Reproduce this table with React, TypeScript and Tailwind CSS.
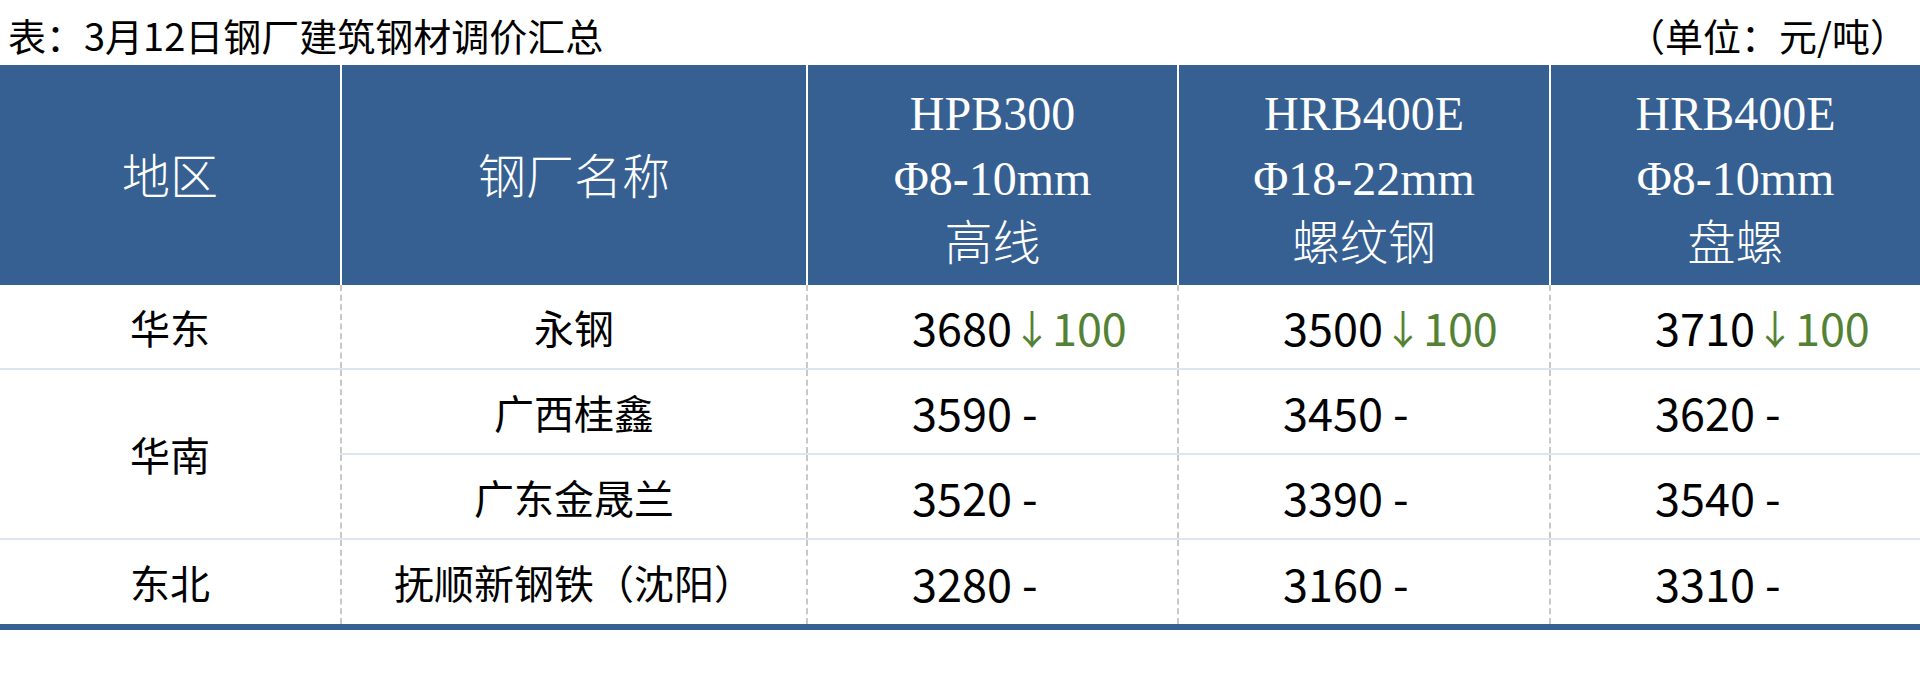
import React from "react";

type Row = { mill: string; prices: string[]; change?: string };

const specs = [
  { grade: "HPB300", size: "8-10mm", kind: "高线" },
  { grade: "HRB400E", size: "18-22mm", kind: "螺纹钢" },
  { grade: "HRB400E", size: "8-10mm", kind: "盘螺" },
];

const rows: Row[] = [
  { mill: "永钢", prices: ["3680", "3500", "3710"], change: "100" },
  { mill: "广西桂鑫", prices: ["3590", "3450", "3620"] },
  { mill: "广东金晟兰", prices: ["3520", "3390", "3540"] },
  { mill: "抚顺新钢铁（沈阳）", prices: ["3280", "3160", "3310"] },
];

function PriceCell({ price, change }: { price: string; change?: string }) {
  return (
    <div className="flex items-center border-l-2 border-dashed border-[#c8c8c8] pl-[104px] text-[45px] leading-none">
      <span>{price}</span>
      {change ? (
        <span className="flex items-center text-[#548235]">
          <span className="text-[40px]">↓</span>
          <span>{change}</span>
        </span>
      ) : (
        <span>&nbsp;-</span>
      )}
    </div>
  );
}

export default function App() {
  return (
    <div className="h-[676px] w-[1920px] bg-white font-['Noto_Sans_CJK_SC',sans-serif] text-black">
      {/* title */}
      <div className="flex h-[65px] items-center justify-between pl-[8px] pr-[12px] pt-[4px] text-[38px] leading-none">
        <span>表：3月12日钢厂建筑钢材调价汇总</span>
        <span>（单位：元/吨）</span>
      </div>

      {/* header */}
      <div className="grid h-[220px] grid-cols-[340px_466px_371px_372px_1fr] bg-[#366092] font-['Liberation_Serif','Noto_Sans_CJK_SC',serif] text-[48px] font-light text-white">
        <div className="flex items-center justify-center pt-[6px]">地区</div>
        <div className="flex items-center justify-center border-l-2 border-white pt-[6px]">钢厂名称</div>
        {specs.map((s, i) => (
          <div
            key={i}
            className="flex flex-col items-center border-l-2 border-white pt-[16px] leading-[65px]"
          >
            <span>{s.grade}</span>
            <span>Φ{s.size}</span>
            <span>{s.kind}</span>
          </div>
        ))}
      </div>

      {/* body */}
      <div className="flex">
        <div className="flex w-[340px] flex-col text-[40px] leading-none">
          <div className="flex h-[85px] items-center justify-center border-b-2 border-[#dce6f1]">华东</div>
          <div className="flex h-[170px] items-center justify-center border-b-2 border-[#dce6f1]">华南</div>
          <div className="flex h-[84px] items-center justify-center">东北</div>
        </div>
        <div className="flex flex-1 flex-col">
          {rows.map((r, i) => (
            <div
              key={i}
              className={
                i < rows.length - 1
                  ? "grid h-[85px] grid-cols-[466px_371px_372px_1fr] border-b-2 border-[#dce6f1]"
                  : "grid h-[84px] grid-cols-[466px_371px_372px_1fr]"
              }
            >
              <div className="flex items-center justify-center border-l-2 border-dashed border-[#c8c8c8] text-[40px] leading-none">
                {r.mill}
              </div>
              {r.prices.map((p, j) => (
                <PriceCell key={j} price={p} change={r.change} />
              ))}
            </div>
          ))}
        </div>
      </div>
      <div className="h-[6px] bg-[#366092]" />
    </div>
  );
}
